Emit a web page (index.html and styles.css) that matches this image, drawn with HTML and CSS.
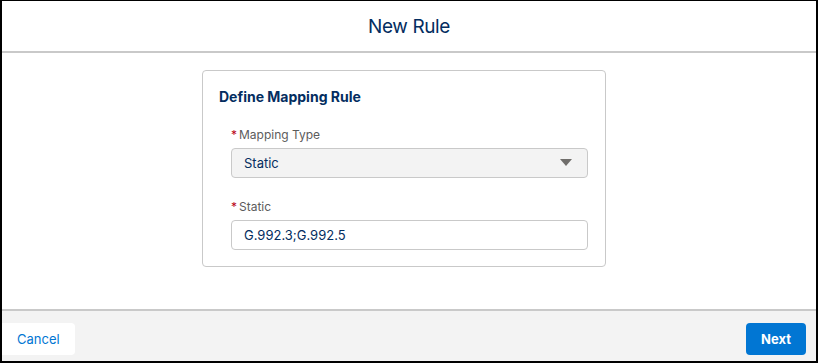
FILE: index.html
```html
<!doctype html>
<html>
<head>
    <meta charset="utf-8">
    <title>New Rule</title>
    <link rel="stylesheet" href="styles.css">
</head>
<body>
    <div id="modal">
        <div class="header">
            <h2 class="title">New Rule</h2>
        </div>
        <div class="content">
            <div class="card">
                <h3 class="card-title">Define Mapping Rule</h3>
                <div class="field">
                    <label class="label"><abbr class="req">*</abbr>Mapping Type</label>
                    <div class="select">
                        <span>Static</span>
                        <svg class="caret" width="12" height="8" viewBox="0 0 12 8"><path d="M0 0 L12 0 L6 7 Z" fill="#706e6b"/></svg>
                    </div>
                </div>
                <div class="field">
                    <label class="label"><abbr class="req">*</abbr>Static</label>
                    <div class="input">G.992.3;G.992.5</div>
                </div>
            </div>
        </div>
        <div class="footer">
            <button class="btn cancel">Cancel</button>
            <button class="btn next">Next</button>
        </div>
    </div>
</body>
</html>
```

FILE: styles.css
```css
html, body {
    margin: 0;
    padding: 0;
}
body {
    font-family: "Inter", "Liberation Sans", sans-serif;
    background-color: white;
}
#modal {
    width: 818px;
    height: 363px;
    box-sizing: border-box;
    border: 2px solid black;
    border-top-width: 1px;
    display: flex;
    flex-direction: column;
}
.header {
    height: 50px;
    border-bottom: 2px solid #c9c9c9;
    display: flex;
    align-items: center;
    justify-content: center;
}
.title {
    margin: 0;
    font-size: 19px;
    font-weight: 400;
    color: #032d60;
    letter-spacing: -0.4px;
}
.content {
    flex-grow: 1;
    padding-top: 17px;
    padding-left: 200px;
}
.card {
    width: 404px;
    box-sizing: border-box;
    border: 1px solid #c9c9c9;
    border-radius: 4px;
    padding: 17px 17px 16px 16px;
}
.card-title {
    margin: 0 0 20px 0;
    font-size: 14px;
    line-height: 18px;
    font-weight: 700;
    color: #032d60;
}
.field {
    margin-left: 12px;
    margin-bottom: 20px;
}
.field:last-child {
    margin-bottom: 0;
}
.label {
    display: block;
    font-size: 12px;
    line-height: 18px;
    color: #5c5c5c;
    margin-bottom: 4px;
}
.req {
    color: #ba0517;
    text-decoration: none;
    margin-right: 2px;
}
.select, .input {
    height: 30px;
    box-sizing: border-box;
    border: 1px solid #c9c9c9;
    border-radius: 4px;
    padding: 0 12px;
    display: flex;
    align-items: center;
    justify-content: space-between;
    font-size: 13px;
    color: #032d60;
}
.select {
    background-color: #f3f3f3;
}
.caret {
    margin-right: 3px;
}
.footer {
    height: 52px;
    box-sizing: border-box;
    padding-top: 6px;
    border-top: 2px solid #c9c9c9;
    background-color: #f3f3f3;
    display: flex;
    align-items: center;
    justify-content: space-between;
}
.btn {
    font-family: "Inter", "Liberation Sans", sans-serif;
    font-size: 13px;
    height: 32px;
    border-radius: 4px;
    border: none;
    padding: 0 15px;
}
.cancel {
    background-color: white;
    color: #0176d3;
    border-radius: 0 4px 4px 0;
}
.next {
    background-color: #0176d3;
    color: white;
    font-weight: 700;
    margin-right: 10px;
}
```
